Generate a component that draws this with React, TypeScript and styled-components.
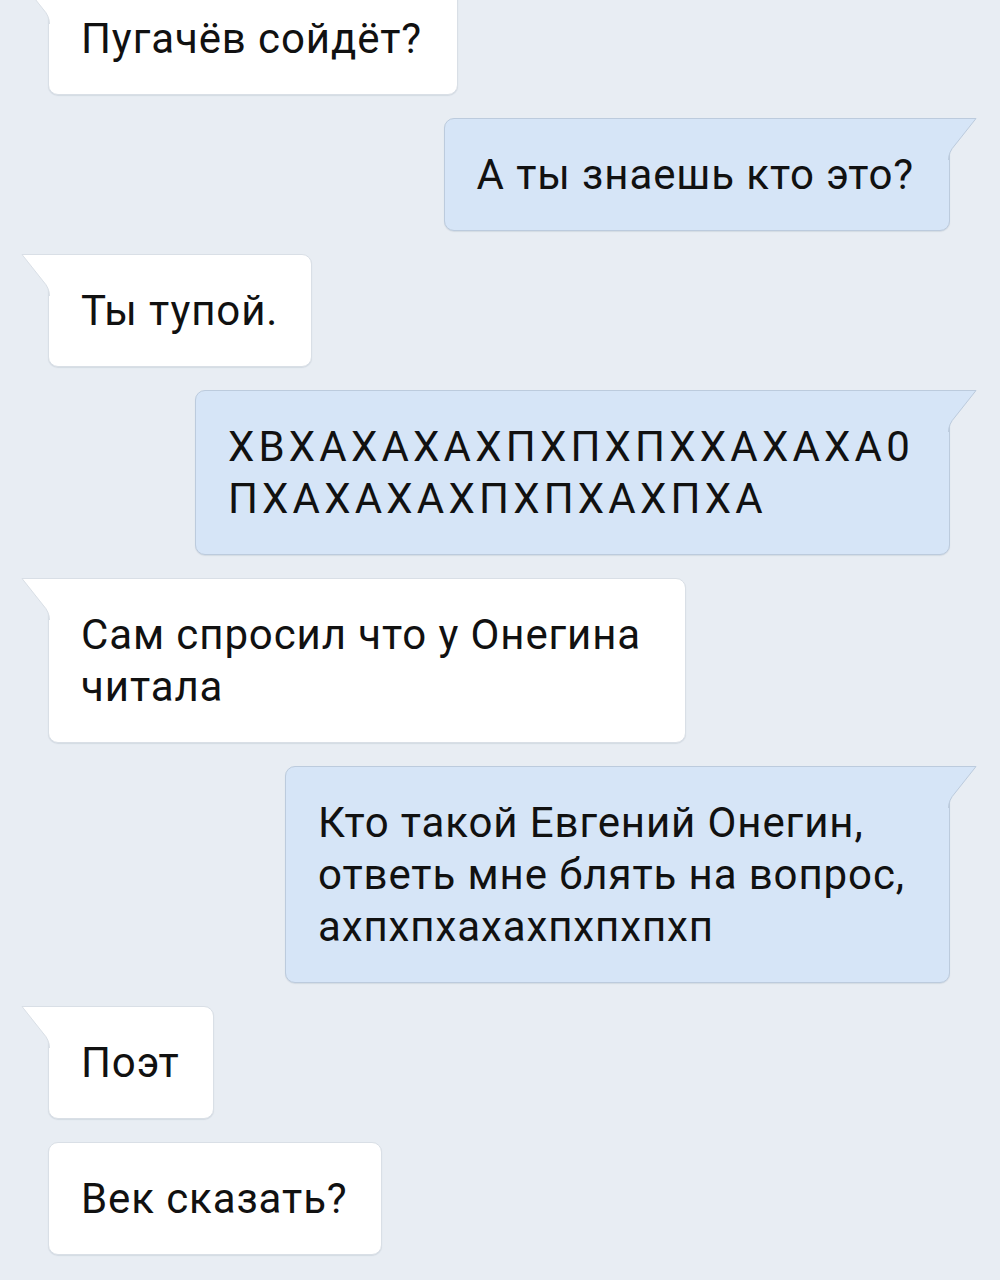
import React from "react";
import styled, { createGlobalStyle } from "styled-components";

const Global = createGlobalStyle`
  html, body { margin: 0; padding: 0; background: #e8edf3; }
  body { font-family: Roboto, "Noto Sans", "Liberation Sans", sans-serif; overflow: hidden; }
`;

const Feed = styled.div`
  display: flex;
  flex-direction: column;
  gap: 23px;
  margin-top: -18px;
  padding: 0 50px 0 48px;
  height: 1298px;
  box-sizing: border-box;
`;

const Row = styled.div<{ $out?: boolean }>`
  display: flex;
  justify-content: ${(p) => (p.$out ? "flex-end" : "flex-start")};
`;

const Bubble = styled.div<{ $out?: boolean; $tail?: boolean; $spacing?: number; $padRight?: number }>`
  position: relative;
  box-sizing: border-box;
  padding: 29.5px ${(p) => p.$padRight ?? 35}px 29.5px 32px;
  background: ${(p) => (p.$out ? "#d6e5f7" : "#ffffff")};
  border: 1px solid ${(p) => (p.$out ? "#bccbdd" : "#d9dfe6")};
  border-radius: 10px;
  ${(p) => (p.$tail ? (p.$out ? "border-top-right-radius: 0;" : "border-top-left-radius: 0;") : "")}
  box-shadow: 0 1px 1px rgba(60, 80, 110, 0.12);
  color: #111111;
  font-size: 42px;
  line-height: 52px;
  letter-spacing: ${(p) => p.$spacing ?? 0.9}px;
  white-space: nowrap;
`;

const TailSvg = styled.svg<{ $out?: boolean }>`
  position: absolute;
  top: -1px;
  ${(p) => (p.$out ? "right: -29px; transform: scaleX(-1);" : "left: -29px;")}
  width: 31px;
  height: 42px;
  overflow: visible;
`;

function Tail({ out }: { out?: boolean }) {
  const fill = out ? "#d6e5f7" : "#ffffff";
  const stroke = out ? "#bccbdd" : "#d9dfe6";
  return (
    <TailSvg $out={out} viewBox="0 0 31 42">
      <path d="M31 0.5 L2 0.5 L23 27 Q29.5 34 29.5 42 L31 42 Z" fill={fill} />
      <path d="M31 0.5 L2 0.5 L23 27 Q29.5 34 29.5 42" fill="none" stroke={stroke} strokeWidth="1" />
    </TailSvg>
  );
}

type Msg = { out?: boolean; tail?: boolean; spacing?: number; padRight?: number; lines: string[] };

const messages: Msg[] = [
  { tail: true, lines: ["Пугачёв сойдёт?"] },
  { out: true, tail: true, lines: ["А ты знаешь кто это?"] },
  { tail: true, padRight: 33, lines: ["Ты тупой."] },
  { out: true, tail: true, spacing: 4.2, lines: ["ХВХАХАХАХПХПХПХХАХАХА0", "ПХАХАХАХПХПХАХПХА"] },
  { tail: true, padRight: 44, lines: ["Сам спросил что у Онегина", "читала"] },
  { out: true, tail: true, padRight: 44, lines: ["Кто такой Евгений Онегин,", "ответь мне блять на вопрос,", "ахпхпхахахпхпхпхп"] },
  { tail: true, padRight: 33, lines: ["Поэт"] },
  { padRight: 33, lines: ["Век сказать?"] },
];

export default function App() {
  return (
    <>
      <Global />
      <Feed>
        {messages.map((m, i) => (
          <Row key={i} $out={m.out}>
            <Bubble $out={m.out} $tail={m.tail} $spacing={m.spacing} $padRight={m.padRight}>
              {m.tail && <Tail out={m.out} />}
              {m.lines.map((l, j) => (
                <React.Fragment key={j}>
                  {j > 0 && <br />}
                  {l}
                </React.Fragment>
              ))}
            </Bubble>
          </Row>
        ))}
      </Feed>
    </>
  );
}
